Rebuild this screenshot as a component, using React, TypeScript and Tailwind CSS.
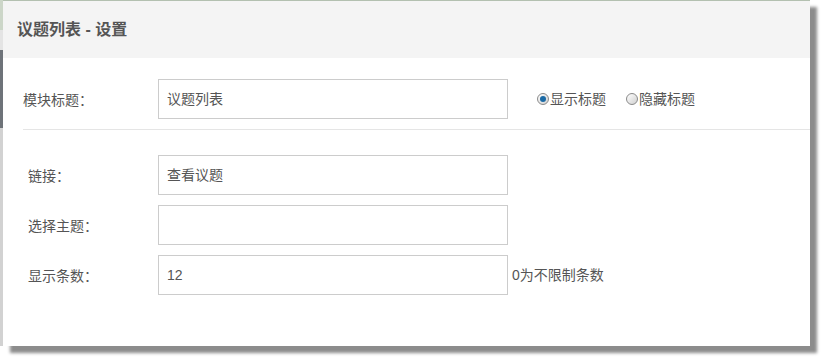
import React from "react";

const cjk = { fontFamily: '"Noto Sans CJK SC", sans-serif' };

// Radio button drawn with CSS (old-style shaded circle)
const Radio = ({ checked, label }: { checked?: boolean; label: string }) => (
  <label className="flex items-center">
    <span className="flex h-[12px] w-[12px] items-center justify-center rounded-full border border-[#8a8a8a] bg-gradient-to-br from-white to-[#d0d0d0]">
      {checked && <span className="h-[6px] w-[6px] rounded-full bg-[#1b6aa5]" />}
    </span>
    <span className="ml-[1px]">{label}</span>
  </label>
);

const Field = ({ label, value, note }: { label: string; value?: string; note?: string }) => (
  <div className="flex items-center">
    <span className="w-[130px]" style={cjk}>{label}</span>
    <div className="flex h-[40px] w-[350px] items-center border border-[#cccccc] px-[8px] text-[#555]">{value}</div>
    {note && <span className="ml-[4px]">{note}</span>}
  </div>
);

export default function App() {
  return (
    <div
      className="flex h-[362px] w-[825px] bg-white text-[14px] text-[#555]"
      style={{ fontFamily: '"Liberation Sans", "Noto Sans CJK SC", sans-serif' }}
    >
      {/* page behind the dialog */}
      <div className="flex h-[346px] w-[3px] flex-col">
        <div className="h-[30px] bg-[#ccd6c8]" />
        <div className="h-[20px] bg-[#e4e4e4]" />
        <div className="h-[78px] bg-[#6e7379]" />
        <div className="flex-1 bg-[#d2d2d2]" />
      </div>

      <div className="flex h-[346px] w-[807px] flex-col border-t border-[#b3c0b0] bg-white shadow-[7px_7px_3px_rgba(0,0,0,0.45)]">
        <div className="flex h-[57px] items-center bg-[#f4f4f4] pl-[14px] text-[16px] font-bold text-[#555]">
          议题列表 - 设置
        </div>

        <div className="ml-[20px] mt-[21px] flex items-center border-b border-[#e5e5e5] pb-[10px]">
          <span className="w-[135px]" style={cjk}>模块标题：</span>
          <div className="flex h-[40px] w-[350px] items-center border border-[#cccccc] px-[8px]">议题列表</div>
          <div className="ml-[29px] flex gap-[20px]">
            <Radio checked label="显示标题" />
            <Radio label="隐藏标题" />
          </div>
        </div>

        <div className="ml-[25px] mt-[25px] flex flex-col gap-[10px]">
          <Field label="链接：" value="查看议题" />
          <Field label="选择主题：" />
          <Field label="显示条数：" value="12" note="0为不限制条数" />
        </div>
      </div>
    </div>
  );
}
